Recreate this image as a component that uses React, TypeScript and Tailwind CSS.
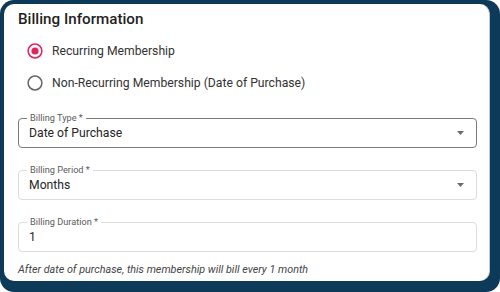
import React from "react";

function Radio({ checked }: { checked: boolean }) {
  return (
    <svg width="16" height="16" viewBox="0 0 16 16" className="shrink-0">
      <circle cx="8" cy="8" r="6.9" fill="none" stroke={checked ? "#e0245e" : "#666"} strokeWidth="1.5" />
      {checked && <circle cx="8" cy="8" r="3.6" fill="#e0245e" />}
    </svg>
  );
}

function Field({ label, value, select, focused }: { label: string; value: string; select?: boolean; focused?: boolean }) {
  return (
    <div
      className={`relative h-[30px] rounded-[4px] border flex items-center pl-[10px] pr-[12px] ${
        focused ? "border-[#7a7a7a]" : "border-[#dcdcdc]"
      }`}
    >
      <span className="absolute left-[8px] top-[-7px] bg-white px-[3px] text-[9.2px] leading-[12px] text-[#5a5a5a]">
        {label}
      </span>
      <span className="flex-1 text-[12.2px] text-[#262626] leading-[16px]">{value}</span>
      {select && (
        <svg width="7" height="4" viewBox="0 0 7 4">
          <path d="M0 0 L7 0 L3.5 4 Z" fill="#6b6b6b" />
        </svg>
      )}
    </div>
  );
}

export default function App() {
  return (
    <div className="w-[500px] h-[292px] bg-white" style={{ fontFamily: "Roboto, 'Liberation Sans', sans-serif" }}>
      <div className="w-full h-full rounded-[14px] bg-[#0e3a5a] pl-[4px] pt-[4px] pr-[10px] pb-[11px]">
        <div className="w-full h-full bg-white rounded-[10px] border-r border-[#c8c8c8] pl-[14px] pr-[12px] pt-[5px]">
          <div className="text-[15.2px] leading-[20px] font-medium text-[#1f1f1f]">Billing Information</div>
          <div className="mt-[6px] flex flex-col">
            <div className="h-[32px] flex items-center gap-[9px] pl-[9px]">
              <Radio checked />
              <span className="text-[12.2px] text-[#333]">Recurring Membership</span>
            </div>
            <div className="h-[32px] flex items-center gap-[9px] pl-[9px]">
              <Radio checked={false} />
              <span className="text-[12.2px] text-[#333]">Non-Recurring Membership (Date of Purchase)</span>
            </div>
          </div>
          <div className="mt-[19px] flex flex-col gap-[22px]">
            <Field label="Billing Type *" value="Date of Purchase" select focused />
            <Field label="Billing Period *" value="Months" select />
            <Field label="Billing Duration *" value="1" />
          </div>
          <div className="mt-[11px] text-[10.8px] italic text-[#444] leading-[14px]">
            After date of purchase, this membership will bill every 1 month
          </div>
        </div>
      </div>
    </div>
  );
}
